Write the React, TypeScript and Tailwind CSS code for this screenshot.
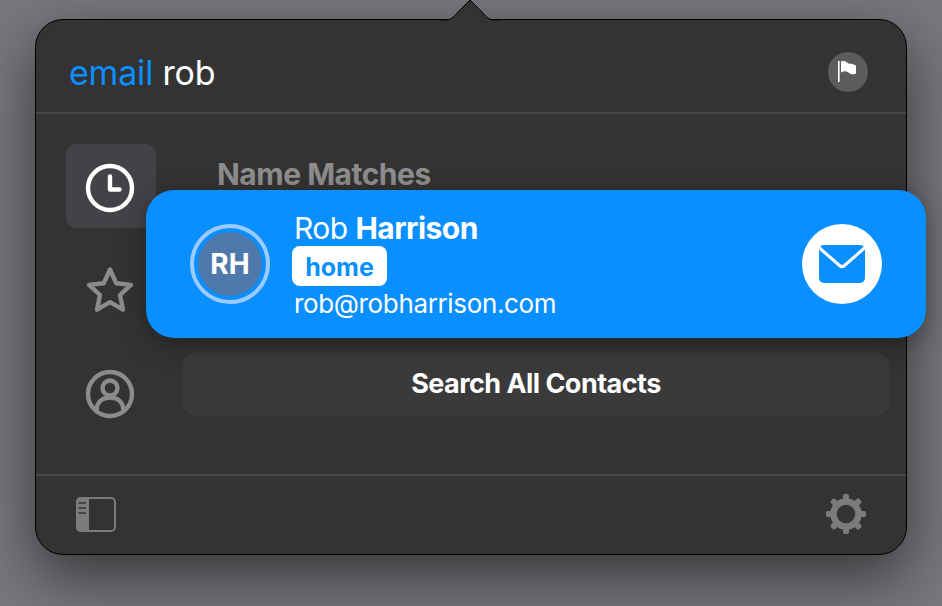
const font = "font-['Inter','Liberation_Sans',sans-serif]";

function ClockIcon() {
  return (
    <svg width="50" height="50" viewBox="0 0 50 50" fill="none" stroke="white">
      <circle cx="25" cy="25" r="22" strokeWidth="4.4" />
      <path d="M25 13.5V26.5H34.5" strokeWidth="4.4" strokeLinecap="round" strokeLinejoin="round" />
    </svg>
  );
}

function StarIcon() {
  return (
    <svg width="50" height="50" viewBox="0 0 50 50" fill="none" stroke="#8c8c8c" strokeWidth="4.4" strokeLinejoin="round">
      <path d="M25 4.5L31.2 18.2L46 19.9L35 30L38 44.6L25 37.2L12 44.6L15 30L4 19.9L18.8 18.2Z" />
    </svg>
  );
}

function PersonIcon() {
  return (
    <svg width="50" height="50" viewBox="0 0 50 50" fill="none" stroke="#8c8c8c" strokeWidth="4.4">
      <circle cx="25" cy="25" r="22" />
      <circle cx="25" cy="19" r="7.5" />
      <path d="M11.5 41C12 33 17 28.5 25 28.5C33 28.5 38 33 38.5 41" />
    </svg>
  );
}

function SidebarIcon() {
  return (
    <svg width="40" height="35" viewBox="0 0 40 35">
      <rect x="1" y="1" width="38" height="33" rx="4" fill="none" stroke="#7b7b7b" strokeWidth="2" />
      <path d="M5 0H13V35H5A5 5 0 0 1 0 30V5A5 5 0 0 1 5 0Z" fill="#7b7b7b" />
      <path d="M2.5 6H10M2.5 11H10M2.5 16H10" stroke="#333" strokeWidth="1.6" />
    </svg>
  );
}

function GearIcon() {
  const angles = [0, 45, 90, 135, 180, 225, 270, 315];
  return (
    <svg width="40" height="40" viewBox="0 0 40 40">
      <circle cx="20" cy="20" r="12.5" fill="none" stroke="#7b7b7b" strokeWidth="6.5" />
      {angles.map((a) => (
        <rect key={a} x="17" y="0" width="6" height="8" rx="1.8" fill="#7b7b7b" transform={`rotate(${a} 20 20)`} />
      ))}
    </svg>
  );
}

function FlagIcon() {
  return (
    <svg width="24" height="24" viewBox="0 0 24 24" fill="white">
      <rect x="2" y="1" width="1.6" height="21" />
      <path d="M5 1.5C7.5 0.5 9.5 1.2 11 2.5C12.5 3.8 14 4.2 15 3.5L20 5.5V13.5C18 14.8 15.5 14.5 14 13.5C12 12 10 10.5 7.5 11.5L5 12.5Z" />
    </svg>
  );
}

function MailIcon() {
  return (
    <svg width="48" height="40" viewBox="0 0 48 40">
      <rect x="1" y="1" width="46" height="38" rx="5" fill="#0a8fff" />
      <path d="M1.5 4L21.5 21.5C23 22.8 25 22.8 26.5 21.5L46.5 4" fill="none" stroke="white" strokeWidth="3" strokeLinecap="round" />
    </svg>
  );
}

export default function App() {
  return (
    <div className={`${font} h-[606px] w-[942px] overflow-hidden bg-[#77787c] pl-[35px] pt-[19px]`}>
      <div className="relative flex h-[536px] w-[872px] flex-col rounded-[28px] border border-black bg-[#333333] shadow-[0_22px_60px_rgba(0,0,0,0.55)]">
        <svg className="absolute left-[404px] top-[-20px]" width="60" height="21" viewBox="0 0 60 21">
          <path d="M0 20H6C12 20 15 15 19 11L30 0L41 11C45 15 48 20 54 20H60V21H0Z" fill="#333333" />
          <path d="M0 20H6C12 20 15 15 19 11L30 0L41 11C45 15 48 20 54 20H60" fill="none" stroke="black" strokeWidth="1" />
        </svg>

        <header className="flex h-[94px] shrink-0 items-center justify-between border-b-2 border-[#474747] pl-[33px] pr-[38px] pt-[12px]">
          <h1 className="text-[34px] tracking-[-0.2px] text-white">
            <span className="text-[#0a8fff]">email</span> rob
          </h1>
          <div className="flex h-10 w-10 items-center justify-center rounded-full bg-[#5c5c5c]">
            <FlagIcon />
          </div>
        </header>

        <div className="flex min-h-0 flex-1">
          <nav className="flex w-[146px] shrink-0 flex-col items-start pl-[30px] pt-[30px]">
            <div className="flex h-[84px] w-[90px] items-center justify-center rounded-[10px] bg-[#434347] pr-[2px] pt-[4px]">
              <ClockIcon />
            </div>
            <div className="mt-[20px] flex h-[84px] w-[90px] items-center justify-center pr-[2px]">
              <StarIcon />
            </div>
            <div className="mt-[20px] flex h-[84px] w-[90px] items-center justify-center pr-[2px]">
              <PersonIcon />
            </div>
          </nav>
          <section className="flex min-w-0 flex-1 flex-col pt-[42px]">
            <h2 className="pl-[35px] text-[30px] font-bold leading-[36px] tracking-[-0.5px] text-[#8d8d8d]">Name Matches</h2>
            <button className="mt-[160px] h-[64px] w-[708px] rounded-2xl bg-[#3a3a3a] text-center text-[27px] font-bold tracking-[-0.55px] text-white">
              Search All Contacts
            </button>
          </section>
        </div>

        <footer className="flex h-[80px] shrink-0 items-center justify-between border-t-2 border-[#474747] pb-[2px] pl-[40px] pr-[40px]">
          <SidebarIcon />
          <GearIcon />
        </footer>

        <div className="absolute left-[110px] top-[170px] flex h-[148px] w-[780px] items-center rounded-[28px] bg-[#0a8fff] pl-[44px] pr-[44px] shadow-[0_6px_24px_rgba(0,0,0,0.35)]">
          <div className="flex h-20 w-20 shrink-0 items-center justify-center rounded-full border-4 border-[#9ecbff] p-[4px]">
            <div className="flex h-full w-full items-center justify-center rounded-full bg-[#5079ab] text-[28px] font-bold text-white">RH</div>
          </div>
          <div className="ml-[22px] flex flex-1 flex-col items-start pt-[4px] text-white">
            <p className="pl-[2px] text-[30px] leading-[36px] tracking-[-0.55px]">
              Rob <span className="font-bold">Harrison</span>
            </p>
            <span className="mt-0 flex h-10 w-[95px] items-center justify-center rounded-lg bg-white pt-[2px] text-[25px] font-bold leading-none text-[#0a8fff]">home</span>
            <p className="pl-[2px] text-[26px] leading-[36px] tracking-[-0.35px]">rob@robharrison.com</p>
          </div>
          <div className="flex h-20 w-20 shrink-0 items-center justify-center rounded-full bg-white">
            <MailIcon />
          </div>
        </div>
      </div>
    </div>
  );
}
